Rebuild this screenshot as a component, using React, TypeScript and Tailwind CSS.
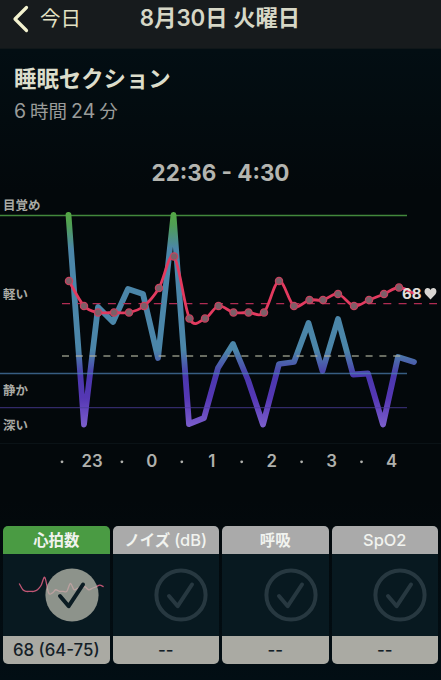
import React from "react";

type Point = [number, number];

const FONT = "font-['Inter','Noto_Sans_CJK_JP',sans-serif]";

const sleep: Point[] = [
  [68.5, 215], [84, 424.5], [98, 307], [113, 322], [128, 289], [143, 294],
  [158, 358], [173.5, 215], [189, 424], [204, 418], [218, 368], [233, 344],
  [248, 380], [263, 424.5], [279, 364], [294, 362], [308.5, 323], [322.5, 371],
  [338, 319], [353, 374.5], [368, 373.5], [383, 424.5], [398, 357], [414, 362],
];

const heart: Point[] = [
  [69, 281], [84, 306], [98, 312.5], [114, 312.5], [129, 312.5], [144, 306],
  [159, 288], [174, 256.5], [189.5, 318.5], [205, 318.5], [218.5, 306],
  [233.5, 312.5], [248.5, 312.5], [264, 312.5], [279, 281], [294, 306],
  [309.5, 300], [323, 300], [338, 294], [354, 306], [369, 300], [384, 294],
  [399, 287.5], [415, 294],
];

const hours = ["23", "0", "1", "2", "3", "4"];

// Catmull-Rom spline through the points
const smooth = (pts: Point[]) => {
  let d = `M${pts[0][0]} ${pts[0][1]}`;
  for (let i = 0; i < pts.length - 1; i++) {
    const a = pts[Math.max(i - 1, 0)];
    const b = pts[i];
    const c = pts[i + 1];
    const e = pts[Math.min(i + 2, pts.length - 1)];
    d += ` C${b[0] + (c[0] - a[0]) / 6} ${b[1] + (c[1] - a[1]) / 6} ${c[0] - (e[0] - b[0]) / 6} ${c[1] - (e[1] - b[1]) / 6} ${c[0]} ${c[1]}`;
  }
  return d;
};

const Header = () => (
  <header className="grid h-[49px] grid-cols-[140px_160px_1fr] border-b border-[#101719] bg-[#171b1d] pb-[11px]">
    <button className="flex items-center pl-3 text-[20.5px] leading-none text-[#e3e2c4]">
      <svg width="17" height="28" viewBox="0 0 17 28" fill="none" className="mr-[11px]">
        <path d="M14.5 2.5 3 14l11.5 11.5" stroke="#f3f2cf" strokeWidth="3.2" strokeLinecap="round" strokeLinejoin="round" />
      </svg>
      <span className="pt-0.5">今日</span>
    </button>
    <h1 className="flex items-center justify-center whitespace-nowrap text-[22.3px] font-semibold leading-none text-[#d6d7c6]">
      8月30日 火曜日
    </h1>
  </header>
);

const Chart = () => (
  <svg width="441" height="290" viewBox="0 190 441 290" className="block">
    <defs>
      <linearGradient id="depth" gradientUnits="userSpaceOnUse" x1="0" y1="212" x2="0" y2="428">
        <stop offset="0" stopColor="#55a844" />
        <stop offset="0.06" stopColor="#4f9f55" />
        <stop offset="0.17" stopColor="#4b86a9" />
        <stop offset="0.64" stopColor="#4b86a9" />
        <stop offset="0.76" stopColor="#4b38ae" />
        <stop offset="0.86" stopColor="#5537b4" />
        <stop offset="1" stopColor="#7d60cd" />
      </linearGradient>
    </defs>

    <path d="M0 215.5H407" stroke="#42883c" strokeWidth="1.3" />
    <path d="M0 443.5H441" stroke="#0a1216" />

    <polyline
      points={sleep.map((p) => p.join(",")).join(" ")}
      fill="none"
      stroke="url(#depth)"
      strokeWidth="5.8"
      strokeLinecap="round"
      strokeLinejoin="round"
    />
    <path d="M0 373.5H407" stroke="#4f82b5" strokeOpacity="0.7" strokeWidth="1.3" />
    <path d="M0 407.7H407" stroke="#4c3d9c" strokeOpacity="0.65" strokeWidth="1.3" />
    <path d="M62 356H407" stroke="#aeb09c" strokeOpacity="0.8" strokeWidth="1.3" strokeDasharray="7 6.8" />
    <path d="M62 303.6H437" stroke="#b02c53" strokeWidth="1.4" strokeDasharray="8 7.3" />

    <path d={smooth(heart)} fill="none" stroke="#e33a5f" strokeWidth="2.8" />
    {heart.slice(0, -1).map(([x, y]) => (
      <circle key={x} cx={x} cy={y} r="3.6" fill="#7c5f68" stroke="#c8425f" strokeWidth="1.3" />
    ))}

    <g fill="#a9aaa5" fontSize="12.5" fontWeight="600">
      <text x="3" y="210">目覚め</text>
      <text x="3" y="298.5">軽い</text>
      <text x="3" y="395">静か</text>
      <text x="3" y="429.5">深い</text>
    </g>
    <text x="402" y="298.6" fill="#e2ddd9" fontSize="15" fontWeight="700">68</text>
    <path
      d="M430.5 299.5 425.7 294.6C423.6 292.3 424.5 288.2 427.4 288.1 429 288 430 288.9 430.5 290 431 288.9 432 288 433.6 288.1 436.5 288.2 437.4 292.3 435.3 294.6Z"
      fill="#d8d5d2"
    />

    <g fill="#b0b1ad" textAnchor="middle" fontSize="16.8" fontWeight="600">
      {hours.map((h, i) => (
        <React.Fragment key={h}>
          <circle cx={62 + i * 59.9} cy="461.8" r="1.4" />
          <text x={92 + i * 59.9} y="466.5">{h}</text>
        </React.Fragment>
      ))}
    </g>
  </svg>
);

const CheckMark = ({ active }: { active?: boolean }) => (
  <svg width="54" height="54" viewBox="0 0 54 54" fill="none" className="absolute left-[41.5px] top-[14px]">
    {active ? (
      <circle cx="27" cy="27" r="26.6" fill="#b8b9ad" fillOpacity="0.76" />
    ) : (
      <circle cx="27" cy="27" r="24.6" stroke="#273840" strokeWidth="4" />
    )}
    <path
      d="M15 28 23.7 38.2 38 16.5"
      stroke={active ? "#0b1c23" : "#273840"}
      strokeWidth="4"
      strokeLinecap="round"
      strokeLinejoin="round"
    />
  </svg>
);

const Sparkline = () => (
  <svg width="106" height="82" viewBox="0 0 106 82" fill="none" className="absolute left-0 top-0">
    <path
      d={smooth(heart.map(([x, y]): Point => [16.2 + (x - 69) * 0.244, 29.5 + (y - 281) * 0.25]))}
      stroke="#c05674"
      strokeWidth="1.3"
    />
  </svg>
);

const metrics = [
  { title: "心拍数", value: "68 (64-75)", active: true },
  { title: "ノイズ", unit: "(dB)", value: "--" },
  { title: "呼吸", value: "--" },
  { title: "", unit: "SpO2", value: "--" },
];

type Metric = { title: string; unit?: string; value: string; active?: boolean };

const MetricCard = ({ title, unit, value, active }: Metric) => (
  <div className="overflow-hidden rounded-[5px] bg-[#081920]">
    <div
      className={`flex h-7 items-center justify-center gap-1 whitespace-nowrap pt-px text-[15.4px] font-semibold leading-none text-[#f1f3ef] ${
        active ? "bg-[#4a9b43]" : "bg-[#aaaaaa]"
      }`}
    >
      {title && <span>{title}</span>}
      {unit && <span className="text-[16.4px] font-medium">{unit}</span>}
    </div>
    <div className="relative h-[82px]">
      {active && <Sparkline />}
      <CheckMark active={active} />
    </div>
    <div className="flex h-7 items-center justify-center whitespace-nowrap bg-[#aaaaa3] pt-px text-[16.8px] font-medium leading-none text-[#142027]">
      {value}
    </div>
  </div>
);

export default function App() {
  return (
    <div className={`h-[680px] w-[441px] overflow-hidden bg-[linear-gradient(#030e13_49px,#03080b_190px,#03080b_500px,#020e14_680px)] ${FONT}`}>
      <Header />
      <section className="h-[141px] pt-[18px]">
        <h2 className="pl-[14px] text-[22.4px] font-bold leading-6 text-[#dcddcb]">睡眠セクション</h2>
        <p className="mt-2 flex items-center gap-1 pl-[14px] text-[18.5px] leading-6 text-[#9a9c9a]">
          <span className="text-[19.5px]">6</span>
          <span>時間</span>
          <span className="text-[19.5px]">24</span>
          <span>分</span>
        </p>
        <p className="mt-[38px] text-center text-[22.4px] font-bold leading-6 text-[#b4b5b0]">22:36 - 4:30</p>
      </section>
      <Chart />
      <div className="mt-[46px] grid grid-cols-4 gap-[3px] px-[3px]">
        {metrics.map((m) => (
          <MetricCard key={m.value + m.title} {...m} />
        ))}
      </div>
    </div>
  );
}
